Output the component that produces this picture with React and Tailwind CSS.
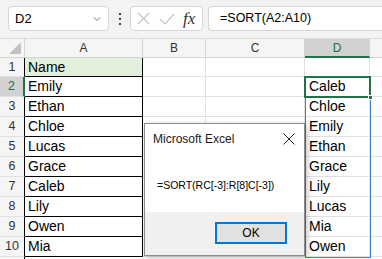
import { ChevronDown } from "lucide-react";

const names = ["Emily", "Ethan", "Chloe", "Lucas", "Grace", "Caleb", "Lily", "Owen", "Mia"];
const sorted = ["Caleb", "Chloe", "Emily", "Ethan", "Grace", "Lily", "Lucas", "Mia", "Owen"];

const font = { fontFamily: '"Liberation Sans", Arial, sans-serif' };

function HeaderCell({ label, width, active }) {
  return (
    <div
      className={`h-full flex items-center justify-center border-r border-[#d4d4d4] text-[12px] ${width} ${
        active ? "bg-[#d2d2d2] text-[#1e6b41] border-b-2 border-b-[#217346]" : "text-[#333] border-b border-b-[#d4d4d4]"
      }`}
    >
      {label}
    </div>
  );
}

function Row({ num, a, d, first, active }) {
  return (
    <div className={`flex ${first ? "h-[19px]" : "h-[20px]"}`}>
      <div
        className={`w-[25px] shrink-0 flex items-center justify-center text-[12.5px] border-b border-[#e1e1e1] ${
          active ? "bg-[#d2d2d2] text-[#1e6b41] border-r-2 border-r-[#217346]" : "bg-[#f5f5f5] text-[#333] border-r border-r-black"
        }`}
      >
        {num}
      </div>
      <div
        className={`w-[118px] shrink-0 flex items-center pl-[3px] text-[14px] text-black border-b border-b-black border-r border-r-black ${
          first ? "bg-[#e2efda]" : "bg-white"
        }`}
      >
        {a}
      </div>
      <div className="w-[63px] shrink-0 bg-white border-b border-r border-[#e1e1e1]" />
      <div className="w-[99px] shrink-0 bg-white border-b border-r border-[#e1e1e1]" />
      <div className="w-[65px] shrink-0 bg-white flex items-center pl-[4px] text-[14px] text-black border-b border-r border-[#e1e1e1]">
        {d}
      </div>
      <div className="flex-1 bg-white border-b border-[#e1e1e1]" />
    </div>
  );
}

export default function App() {
  return (
    <div className="w-[382px] h-[259px] overflow-hidden relative bg-white" style={font}>
      {/* formula bar */}
      <div className="h-[39px] bg-[#f3f3f3] flex items-start pt-[6px] border-b border-[#dcdcdc]">
        <div className="ml-[8px] w-[101px] h-[25px] rounded-[4px] border border-[#d6d6d6] bg-white flex items-center justify-between pl-[6px] pr-[5px]">
          <span className="text-[13px] text-black">D2</span>
          <ChevronDown className="w-[12px] h-[12px] text-[#555]" strokeWidth={1.6} />
        </div>
        <div className="w-[21px] h-[25px] flex flex-col items-center justify-center gap-[3px]">
          <span className="w-[2px] h-[2px] bg-[#444]" />
          <span className="w-[2px] h-[2px] bg-[#444]" />
          <span className="w-[2px] h-[2px] bg-[#444]" />
        </div>
        <div className="w-[73px] h-[25px] rounded-[4px] border border-[#d6d6d6] bg-white flex items-center pl-[6px]">
          <svg width="13" height="13" viewBox="0 0 13 13" className="shrink-0">
            <path d="M1 1 L12 12 M12 1 L1 12" stroke="#c4c4c4" strokeWidth="1.2" fill="none" />
          </svg>
          <svg width="16" height="12" viewBox="0 0 16 12" className="ml-[9px] shrink-0">
            <path d="M1 6 L6 11 L15 1" stroke="#c4c4c4" strokeWidth="1.2" fill="none" />
          </svg>
          <span
            className="ml-[8px] text-[17px] italic text-[#333] leading-none"
            style={{ fontFamily: '"Liberation Serif", "Times New Roman", serif' }}
          >
            fx
          </span>
        </div>
        <div className="ml-[5px] flex-1 h-[25px] rounded-l-[4px] border border-r-0 border-[#d6d6d6] bg-white flex items-center pl-[11px] text-[12.5px] text-black">
          =SORT(A2:A10)
        </div>
      </div>

      {/* column headers */}
      <div className="flex h-[19px] bg-[#f5f5f5]">
        <div className="w-[25px] h-full flex items-end justify-end pr-[3px] pb-[3px] border-r border-b border-[#d4d4d4]">
          <svg width="12" height="12" viewBox="0 0 12 12">
            <path d="M12 0 L12 12 L0 12 Z" fill="#c2c2c2" />
          </svg>
        </div>
        <HeaderCell label="A" width="w-[118px]" />
        <HeaderCell label="B" width="w-[63px]" />
        <HeaderCell label="C" width="w-[99px]" />
        <HeaderCell label="D" width="w-[65px]" active />
        <div className="flex-1 h-full border-b border-[#d4d4d4]" />
      </div>

      {/* rows */}
      <Row num="1" a="Name" d="" first />
      {names.map((n, i) => (
        <Row key={n} num={String(i + 2)} a={n} d={sorted[i]} active={i === 0} />
      ))}
      <div className="flex h-[4px]">
        <div className="w-[25px] bg-[#f5f5f5] border-r border-black" />
        <div className="flex-1 bg-white" />
      </div>

      {/* spill range + active cell */}
      <div className="absolute left-[305px] top-[77px] w-[66px] h-[181px] border border-[#3b7ddd] pointer-events-none" />
      <div className="absolute left-[304px] top-[76px] w-[67px] h-[22px] border-2 border-[#217346] pointer-events-none" />
      <div className="absolute left-[368px] top-[95px] w-[5px] h-[5px] bg-[#217346] border border-white" />

      {/* dialog */}
      <div className="absolute left-[144px] top-[123px] w-[161px] h-[133px] bg-white border border-[#8c8c8c] shadow-[2px_2px_6px_rgba(0,0,0,0.25)] flex flex-col">
        <div className="h-[30px] flex items-center justify-between pl-[8px] pr-[9px]">
          <span className="text-[12px] text-[#1a1a1a]">Microsoft Excel</span>
          <svg width="12" height="12" viewBox="0 0 12 12">
            <path d="M0.5 0.5 L11.5 11.5 M11.5 0.5 L0.5 11.5" stroke="#222" strokeWidth="1" fill="none" />
          </svg>
        </div>
        <div className="flex-1 flex items-center pl-[12px] pt-[6px] text-[10.5px] text-black">
          =SORT(RC[-3]:R[8]C[-3])
        </div>
        <div className="h-[43px] bg-[#f0f0f0] flex items-start justify-end pt-[10px] pr-[17px]">
          <div className="w-[72px] h-[22px] border-2 border-[#0078d7] bg-[#e1e1e1] flex items-center justify-center text-[12px] text-black">
            OK
          </div>
        </div>
      </div>
    </div>
  );
}
